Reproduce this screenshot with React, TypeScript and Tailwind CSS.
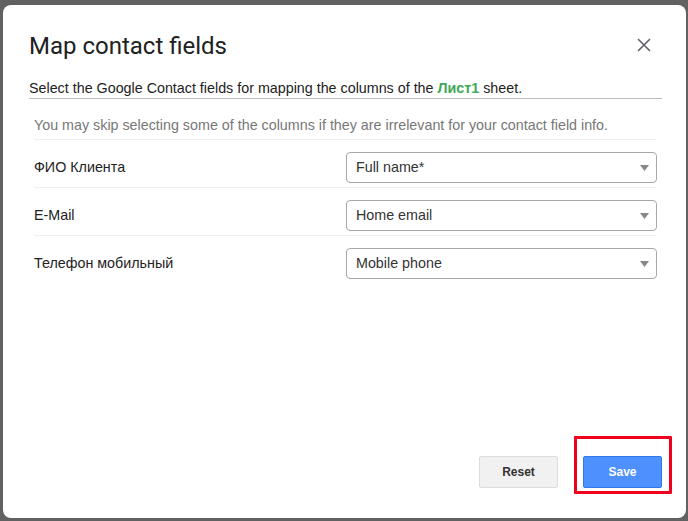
import React from "react";

const rows = [
  { label: "ФИО Клиента", value: "Full name*" },
  { label: "E-Mail", value: "Home email" },
  { label: "Телефон мобильный", value: "Mobile phone" },
];

export default function App() {
  return (
    <div className="w-[688px] h-[521px] bg-[#616161] pl-[3px] pt-[5px] overflow-hidden" style={{ fontFamily: '"Liberation Sans", Arial, sans-serif' }}>
      <div className="w-[683px] h-[513px] bg-white rounded-[8px] flex flex-col pl-[26px] pr-[26px]">
        <div className="flex items-center justify-between pt-[27px]">
          <h1 className="text-[24px] leading-[28px] text-[#212121] font-normal" style={{ fontFamily: 'Roboto, "Liberation Sans", sans-serif' }}>
            Map contact fields
          </h1>
          <button className="w-[24px] h-[24px] flex items-center justify-center mr-[4px] mt-[-2px]">
            <svg width="14" height="14" viewBox="0 0 14 14" stroke="#5f6368" strokeWidth="1.6" fill="none">
              <path d="M1 1 L13 13 M13 1 L1 13" />
            </svg>
          </button>
        </div>
        <p className="mt-[19px] text-[14.3px] leading-[18px] text-[#222] pb-[1px] border-b border-[#bdbdbd] w-[633px]">
          Select the Google Contact fields for mapping the columns of the{" "}
          <span className="font-bold text-[#3fa85a]">Лист1</span> sheet.
        </p>
        <div className="pl-[5px] w-[627px]">
          <div className="text-[14.3px] leading-[18px] text-[#777] pt-[17px] pb-[5px] border-b border-[#eeeeee]">
            You may skip selecting some of the columns if they are irrelevant for your contact field info.
          </div>
          {rows.map((r, i) => (
            <div key={i} className={`flex items-center justify-between pt-[12px] pb-[4px] ${i < 2 ? "border-b border-[#eeeeee]" : ""}`}>
              <span className="text-[14.3px] text-[#222]">{r.label}</span>
              <div className="w-[311px] h-[31px] border border-[#a8a8a8] rounded-[4px] flex items-center justify-between pl-[9px] pr-[7px] mr-[-1px]">
                <span className="text-[14.3px] text-[#333]">{r.value}</span>
                <svg width="9" height="6" viewBox="0 0 9 6">
                  <path d="M0 0 H9 L4.5 6 Z" fill="#888" />
                </svg>
              </div>
            </div>
          ))}
        </div>
        <div className="flex-1" />
        <div className="flex justify-end items-center gap-[25px] pb-[30px] mr-[-2px]">
          <button className="w-[79px] h-[32px] bg-[#f1f1f1] border border-[#dcdcdc] rounded-[2px] text-[12px] font-bold text-[#333]">
            Reset
          </button>
          <div className="relative">
            <button className="w-[79px] h-[32px] bg-[#4d90fe] border border-[#3079ed] rounded-[2px] text-[12px] font-bold text-white">
              Save
            </button>
            <div className="absolute left-[-9px] top-[-20px] w-[98px] h-[58px] border-[3px] border-[#f0001c] rounded-[1px]" />
          </div>
        </div>
      </div>
    </div>
  );
}
